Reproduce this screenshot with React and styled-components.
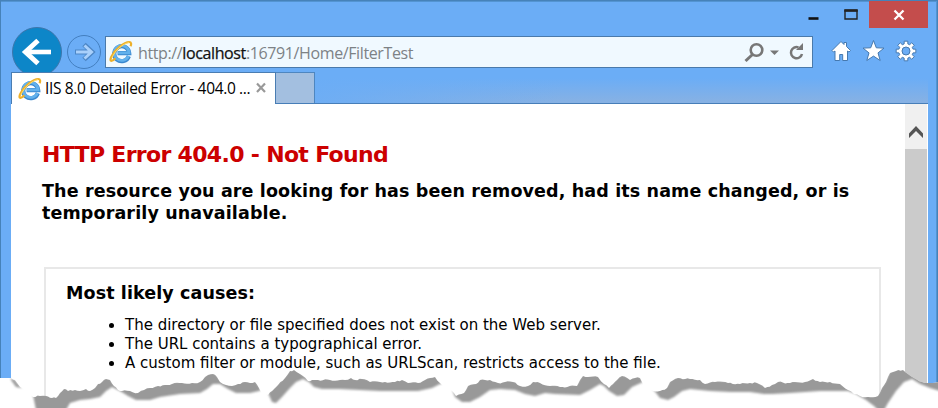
import React from "react";
import styled, { createGlobalStyle } from "styled-components";

const Global = createGlobalStyle`
  * { box-sizing: border-box; }
  html, body { margin: 0; padding: 0; background: #fff; overflow: hidden; }
`;

const Window = styled.div`
  position: relative;
  width: 938px;
  height: 408px;
  overflow: hidden;
  display: flex;
  flex-direction: column;
  background: #6badf6;
  padding: 1px 10px 0 11px;
  box-shadow: inset 0 0 0 1px #4682b9, inset -2px 2px 0 #5394d2;
`;

const TitleBar = styled.div`
  display: flex;
  justify-content: flex-end;
  height: 27px;
  flex: none;
`;

const Caption = styled.div`
  display: flex;
  width: ${(p) => p.$w}px;
  height: 27px;
  background: ${(p) => (p.$close ? "#c44d4c" : "transparent")};
  svg { display: block; }
`;

const NavRow = styled.div`
  display: flex;
  height: 44px;
  flex: none;
  align-items: flex-start;
`;

const BackButton = styled.div`
  width: 50px;
  height: 50px;
  flex: none;
  margin: -1px 4px 0 1px;
  border-radius: 50%;
  background: #0d86c8;
  border: 1px solid #3d76ac;
`;

const ForwardButton = styled.div`
  width: 34px;
  height: 34px;
  flex: none;
  margin: 7px 4px 0 1px;
  border-radius: 50%;
  border: 1px solid #437fc0;
`;

const AddressBar = styled.div`
  display: flex;
  align-items: center;
  width: 708px;
  height: 32px;
  flex: none;
  margin-top: 8px;
  padding-left: 3px;
  background: #f0f9ff;
  border: 1px solid #4a7aab;
`;

const Url = styled.div`
  flex: 1;
  padding: 2px 0 0 5px;
  font: 16px/28px "Open Sans", "Noto Sans", sans-serif;
  letter-spacing: -0.38px;
  color: #7d8286;
  white-space: nowrap;
  b { font-weight: 400; color: #111; -webkit-text-stroke: 0.25px #111; }
`;

const ToolIcons = styled.div`
  display: flex;
  margin: 8px 0 0 16px;
`;

const TabRow = styled.div`
  position: relative;
  display: flex;
  height: 32px;
  flex: none;
  background: linear-gradient(100deg, #6badf6 30%, #6badf600 60%),
    linear-gradient(#6badf6 20%, #86b1e4 95%);
  border-bottom: 1px solid #477eb8;
`;

const Tab = styled.div`
  display: flex;
  align-items: center;
  width: 265px;
  height: 32px;
  padding-left: 6px;
  background: #fff;
  border: 1px solid #4a7db2;
  border-bottom: 0;
`;

const TabTitle = styled.div`
  width: 212px;
  padding: 0 0 1px 3px;
  font: 15.5px/28px "Open Sans", "Noto Sans", sans-serif;
  letter-spacing: -0.34px;
  color: #000;
  white-space: nowrap;
`;

const NewTab = styled.div`
  width: 39px;
  height: 31px;
  background: #a3bfe0;
  border: 1px solid #4e86c0;
  border-left: 0;
  border-bottom: 0;
`;

const Viewport = styled.div`
  display: flex;
  flex: 1;
  background: #fff;
`;

const Page = styled.div`
  flex: 1;
  padding: 37px 24px 0 31px;
  font-family: "DejaVu Sans", sans-serif;
  color: #000;
`;

const ErrorTitle = styled.h1`
  margin: 0;
  font-size: 22px;
  line-height: 28px;
  letter-spacing: -0.68px;
  color: #c00;
  white-space: nowrap;
`;

const ErrorText = styled.h2`
  margin: 12px 0 0;
  font-size: 17.5px;
  line-height: 21.5px;
  letter-spacing: 0.13px;
  white-space: nowrap;
`;

const CauseBox = styled.section`
  width: 837px;
  height: 200px;
  margin: 43px 0 0 2px;
  padding: 13px 0 0 20px;
  border: 2px solid #e8e8e8;
`;

const CauseTitle = styled.h3`
  margin: 0;
  font-size: 17.5px;
  line-height: 22px;
  letter-spacing: 0.1px;
`;

const Causes = styled.ul`
  margin: 12px 0 0;
  padding: 0 0 0 59px;
  font-size: 15px;
  line-height: 19px;
  letter-spacing: 0;
  white-space: nowrap;
`;

const Scrollbar = styled.div`
  width: 22px;
  margin-right: 1px;
  background: #f0f0f0;
  display: flex;
  flex-direction: column;
  svg { display: block; }
`;

const Thumb = styled.div`
  flex: 1;
  background: #cbcbcb;
`;

const TearLayer = styled.svg`
  position: absolute;
  left: 0;
  top: 0;
`;

function BrowserLogo() {
  return (
    <svg width="24" height="24" viewBox="0 0 24 24" fill="none">
      <path d="M19.800 16.200A7.500 7.500 0 1 1 20.200 13.100H8.600" stroke="#3a88cf" strokeWidth="4.200" />
      <path d="M19.500 15.900A7.400 7.400 0 1 1 20.100 12.900H8.800" stroke="#62b1ec" strokeWidth="2.800" />
      <path d="M6.400 18.400C2.400 22.200 0 21.600 2.500 16.500 6 9.400 15 2 20.200 2c2.300 0 2.300 2.300 1.300 4.300" stroke="#edb02a" strokeWidth="2.200" />
      <path d="M3 18C5.500 10.800 14 3.500 20 2.600" stroke="#ffdc6a" strokeWidth="1" />
    </svg>
  );
}

const TEARS = [
  { top: [[11,378],[15,380],[18,384],[22,388]], bottom: [[22,388],[16,387],[11,380]] },
  {
    top: [[33,397],[40,396],[48,396.5],[52,398],[56,398],[60,393],[64,389],[68,391],[75,390],[80,391],[86,389],[90,391],[95,388],[98,384],[102,382],[106,379],[110,380],[114,386],[118,390],[122,391],[130,391],[138,393],[144,390],[150,388],[158,386],[165,385],[172,384],[182,383],[192,383],[200,382],[205,377],[208,375],[213,374],[217,377],[220,382],[226,385],[232,386],[238,384],[245,382],[250,383],[255,382],[259,388],[261,392]],
    bottom: [[259,391],[250,393],[236,393],[228,389],[220,384],[213,384],[207,389],[200,393],[180,394],[160,397],[150,400],[136,400],[128,396],[120,391],[112,387],[106,391],[100,397],[90,399],[80,400],[70,403],[66,410],[36,410]],
  },
  {
    top: [[268,395],[272,391],[278,385],[285,378],[290,371],[294,370],[300,374],[308,381],[312,380],[318,380],[330,380],[345,380],[351,378],[355,380],[362,379],[370,382],[385,382],[395,382],[402,380],[408,383],[418,383],[425,380],[435,377],[440,383],[443,386]],
    bottom: [[440,384],[432,388],[418,391],[400,391],[380,391],[360,390],[340,389],[322,389],[314,387],[309,382],[303,379],[296,382],[290,388],[282,397],[276,403],[272,402]],
  },
  {
    top: [[452,391],[454,393],[456,396],[464,393],[468,386],[476,384],[480,380],[490,380],[498,383],[505,382],[513,382],[520,386],[528,386],[533,382],[540,383],[550,386],[560,387],[577,386],[580,380],[583,376],[598,377],[604,384],[609,388],[613,384],[617,380],[622,376],[630,380],[635,378],[640,378],[643,384]],
    bottom: [[632,387],[624,395],[617,396],[609,391],[604,386],[600,384],[590,390],[580,395],[555,394],[545,393],[535,396],[525,394],[515,390],[500,389],[490,390],[480,397],[470,402],[462,402],[455,397]],
  },
  {
    top: [[653,391],[660,391],[667,388],[670,382],[678,378],[690,379],[700,380],[705,384],[715,382],[728,383],[740,384],[750,383],[757,383],[765,388],[772,385],[778,382],[790,383],[805,382],[813,379],[820,382],[830,382],[840,384],[848,390],[854,394],[860,396],[868,397],[878,396],[882,388],[886,382],[890,373],[896,371],[903,370],[908,374],[914,378],[922,382],[930,383],[940,381]],
    bottom: [[940,391],[930,388],[920,384],[912,379],[904,382],[896,391],[888,403],[884,410],[878,410],[874,406],[866,400],[856,394],[848,391],[840,391],[820,391],[790,393],[772,394],[764,394],[750,392],[730,392],[710,391],[690,389],[682,391],[674,397],[668,400],[660,398]],
  },
];

function roughen(points) {
  const out = [points[0]];
  for (let i = 1; i < points.length; i++) {
    const [x0, y0] = points[i - 1];
    const [x1, y1] = points[i];
    const n = Math.max(1, Math.round((x1 - x0) / 2.5));
    for (let k = 1; k < n; k++) {
      const x = x0 + ((x1 - x0) * k) / n;
      out.push([x, y0 + ((y1 - y0) * k) / n + Math.sin(x * 7.3) * 0.8]);
    }
    out.push([x1, y1]);
  }
  return out;
}

const path = (points) => "M" + points.map((p) => p.join(",")).join("L");

function TornEdge() {
  const tops = TEARS.map((t) => roughen(t.top));
  const edge = path([[-2, 378], ...tops.flat(), [940, 412], [-2, 412]]) + "Z";
  return (
    <TearLayer width="938" height="408" viewBox="0 0 938 408">
      <defs>
        <clipPath id="paper"><path d={edge} /></clipPath>
        <filter id="soft" x="-5%" y="-50%" width="110%" height="200%">
          <feGaussianBlur stdDeviation="1.3" />
        </filter>
      </defs>
      <path d={edge} fill="#fff" />
      <g clipPath="url(#paper)">
        <g filter="url(#soft)">
          {TEARS.map((t, i) => (
            <path
              key={i}
              d={path([...t.top.map(([x, y]) => [x, y - (i ? 2 : 0)]), ...t.bottom]) + "Z"}
              fill="#999"
            />
          ))}
        </g>
      </g>
    </TearLayer>
  );
}

const gearPoints = Array.from({ length: 8 }, (_, i) =>
  [[-0.26, 7.3], [-0.18, 10], [0.18, 10], [0.26, 7.3]].map(([a, r]) => {
    const t = (i * Math.PI) / 4 + a;
    return [(Math.sin(t) * r).toFixed(2), (-Math.cos(t) * r).toFixed(2)];
  })
).flat();

export default function App() {
  return (
    <Window>
      <Global />
      <TitleBar>
        <Caption $w={44}>
          <svg width="36" height="27"><path d="M8.500 17.500h10" stroke="#111" strokeWidth="2.600" /></svg>
        </Caption>
        <Caption $w={25}>
          <svg width="25" height="27">
            <path d="M1 9.500h12v8.500h-12z" fill="none" stroke="#222" strokeWidth="1.400" />
            <path d="M.3 9.500h13.400" stroke="#222" strokeWidth="2.600" />
          </svg>
        </Caption>
        <Caption $w={59} $close>
          <svg width="59" height="27"><path d="M25.500 9.500l9 9m0-9l-9 9" stroke="#fff" strokeWidth="2.300" /></svg>
        </Caption>
      </TitleBar>
      <NavRow>
        <BackButton>
          <svg width="48" height="48" fill="none" stroke="#fff">
            <path d="M12 24h26" strokeWidth="4.600" />
            <path d="M25 12.500L12.500 24 25 35.500" strokeWidth="5" />
          </svg>
        </BackButton>
        <ForwardButton>
          <svg width="32" height="32" fill="none">
            <path d="M7 16h17M16 8.500l8 7.500-8 7.500" stroke="#4d87c6" strokeWidth="5" />
            <path d="M8 16h15M16.500 9.500l7 6.500-7 6.500" stroke="#a9d0fb" strokeWidth="3" />
          </svg>
        </ForwardButton>
        <AddressBar>
          <BrowserLogo />
          <Url>http://<b>localhost</b>:16791/Home/FilterTest</Url>
          <svg width="68" height="30" fill="none" stroke="#777">
            <circle cx="12.500" cy="13" r="5.800" strokeWidth="2.600" />
            <path d="M8.500 17.500l-7 6.500" strokeWidth="3" />
            <path d="M26 13.500h9l-4.500 4.500z" fill="#777" stroke="none" />
            <path d="M54.500 10.400A5.600 5.600 0 1 0 58 17" strokeWidth="2.500" />
            <path d="M53 6v7h7z" fill="#777" stroke="none" transform="rotate(-90 56 10)" />
          </svg>
        </AddressBar>
        <ToolIcons>
          <svg width="100" height="32" fill="#fff" stroke="#4679af" strokeWidth="1" strokeLinejoin="round">
            <path d="M12 5.500L3 14.500l1.500 1.500 1.500-1v9.500h4.700v-6h3v6h4.800V15l1.500 1 1.500-1.500-4-4V6.500h-2.500v2z" />
            <path d="M44.500 4.500l2.800 7.300 7.700.3-6 4.800 2.200 7.600-6.700-4.400-6.700 4.400 2.200-7.600-6-4.800 7.700-.3z" />
            <g transform="translate(77 15)">
              <path fillRule="evenodd" d={path(gearPoints) + "ZM4 0A4 4 0 1 0-4 0 4 4 0 1 0 4 0Z"} />
            </g>
          </svg>
        </ToolIcons>
      </NavRow>
      <TabRow>
        <Tab>
          <BrowserLogo />
          <TabTitle>IIS 8.0 Detailed Error - 404.0 ...</TabTitle>
          <svg width="14" height="14"><path d="M3 1.500l8 8.500m0-8.500l-8 8.500" stroke="#999" strokeWidth="2.200" /></svg>
        </Tab>
        <NewTab />
      </TabRow>
      <Viewport>
        <Page>
          <ErrorTitle>HTTP Error 404.0 - Not Found</ErrorTitle>
          <ErrorText>
            The resource you are looking for has been removed, had its name changed, or is
            <br />
            temporarily unavailable.
          </ErrorText>
          <CauseBox>
            <CauseTitle>Most likely causes:</CauseTitle>
            <Causes>
              <li>The directory or file specified does not exist on the Web server.</li>
              <li>The URL contains a typographical error.</li>
              <li>A custom filter or module, such as URLScan, restricts access to the file.</li>
            </Causes>
          </CauseBox>
        </Page>
        <Scrollbar>
          <svg width="22" height="45"><path d="M4 34v-4.500l7-7.500 7 7.500V34l-7-7z" fill="#555" /></svg>
          <Thumb />
        </Scrollbar>
      </Viewport>
      <TornEdge />
    </Window>
  );
}
